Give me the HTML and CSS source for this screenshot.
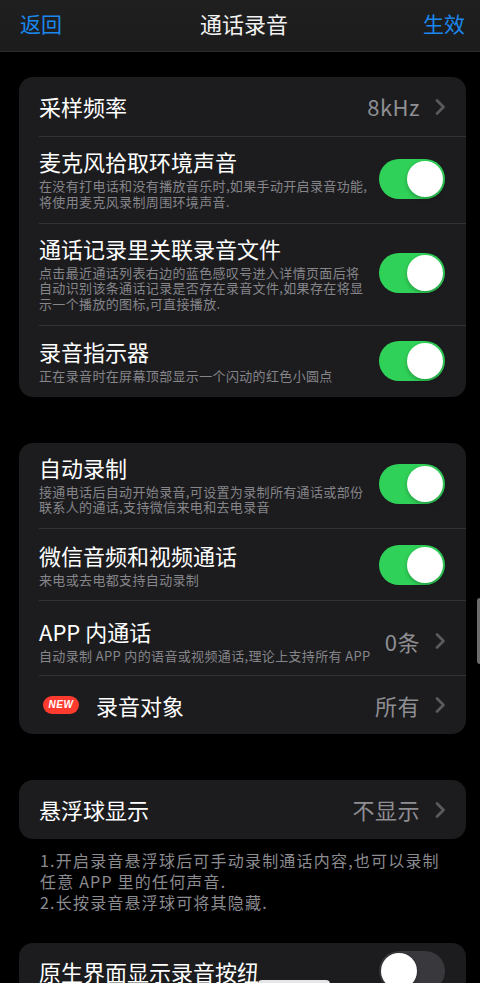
FILE: index.html
```html
<!DOCTYPE html>
<html lang="zh-CN">
<head>
<meta charset="utf-8">
<title>通话录音</title>
<link rel="stylesheet" href="styles.css">
</head>
<body>
<header class="nav">
  <span class="nav-btn nav-left">返回</span>
  <span class="nav-title">通话录音</span>
  <span class="nav-btn nav-right">生效</span>
</header>

<main class="page">
  <section class="card">
    <div class="row simple">
      <span class="title">采样频率</span>
      <span class="value">8kHz</span>
      <svg class="chev" width="12" height="18" viewBox="0 0 12 18"><polyline points="3,2.5 9.5,9 3,15.5"/></svg>
    </div>
    <div class="row">
      <div class="text">
        <div class="title">麦克风拾取环境声音</div>
        <div class="sub">在没有打电话和没有播放音乐时,如果手动开启录音功能,<br>将使用麦克风录制周围环境声音.</div>
      </div>
      <span class="switch on"><span class="knob"></span></span>
    </div>
    <div class="row">
      <div class="text">
        <div class="title">通话记录里关联录音文件</div>
        <div class="sub">点击最近通话列表右边的蓝色感叹号进入详情页面后将<br>自动识别该条通话记录是否存在录音文件,如果存在将显<br>示一个播放的图标,可直接播放.</div>
      </div>
      <span class="switch on"><span class="knob"></span></span>
    </div>
    <div class="row mid">
      <div class="text">
        <div class="title">录音指示器</div>
        <div class="sub">正在录音时在屏幕顶部显示一个闪动的红色小圆点</div>
      </div>
      <span class="switch on"><span class="knob"></span></span>
    </div>
  </section>

  <section class="card">
    <div class="row">
      <div class="text">
        <div class="title">自动录制</div>
        <div class="sub">接通电话后自动开始录音,可设置为录制所有通话或部份<br>联系人的通话,支持微信来电和去电录音</div>
      </div>
      <span class="switch on"><span class="knob"></span></span>
    </div>
    <div class="row mid">
      <div class="text">
        <div class="title">微信音频和视频通话</div>
        <div class="sub">来电或去电都支持自动录制</div>
      </div>
      <span class="switch on"><span class="knob"></span></span>
    </div>
    <div class="row mid tall">
      <div class="text">
        <div class="title">APP 内通话</div>
        <div class="sub">自动录制 APP 内的语音或视频通话,理论上支持所有 APP</div>
      </div>
      <span class="value">0条</span>
      <svg class="chev" width="12" height="18" viewBox="0 0 12 18"><polyline points="3,2.5 9.5,9 3,15.5"/></svg>
    </div>
    <div class="row simple">
      <span class="badge">NEW</span>
      <span class="title">录音对象</span>
      <span class="value">所有</span>
      <svg class="chev" width="12" height="18" viewBox="0 0 12 18"><polyline points="3,2.5 9.5,9 3,15.5"/></svg>
    </div>
  </section>

  <section class="card">
    <div class="row simple">
      <span class="title">悬浮球显示</span>
      <span class="value">不显示</span>
      <svg class="chev" width="12" height="18" viewBox="0 0 12 18"><polyline points="3,2.5 9.5,9 3,15.5"/></svg>
    </div>
  </section>
  <p class="note">1.开启录音悬浮球后可手动录制通话内容,也可以录制<br>任意 APP 里的任何声音.<br>2.长按录音悬浮球可将其隐藏.</p>

  <section class="card">
    <div class="row simple short">
      <span class="title">原生界面显示录音按纽</span>
      <span class="switch"><span class="knob"></span></span>
    </div>
  </section>
</main>

<div class="scroll-indicator"></div>
<div class="toast-edge"></div>
</body>
</html>
```

FILE: styles.css
```css
* { box-sizing: border-box; }

html, body {
  margin: 0;
  padding: 0;
  background: #000;
  color: #fff;
  font-family: "Noto Sans CJK SC", "Noto Sans", sans-serif;
}

body {
  width: 480px;
  height: 983px;
  overflow: hidden;
  position: relative;
}

.nav {
  height: 52px;
  display: grid;
  grid-template-columns: 1fr auto 1fr;
  align-items: center;
  padding: 0 15px 6px 20px;
  background: linear-gradient(180deg, #1f1f1f 0%, #1c1c1c 100%);
  border-bottom: 1px solid #2a2a2a;
}

.nav-btn {
  font-size: 21px;
  line-height: 28px;
  color: #1a88ef;
}

.nav-right { justify-self: end; }

.nav-title {
  font-size: 22px;
  line-height: 28px;
  color: #f2f2f2;
  padding-left: 3px;
}

.page {
  padding: 25px 14px 0 19px;
  display: flex;
  flex-direction: column;
}

.card {
  background: #1c1c1e;
  border-radius: 14px;
  padding-left: 20px;
  margin-bottom: 46px;
  overflow: hidden;
}

.row {
  display: flex;
  align-items: center;
  padding: 11px 21px 13.5px 0;
  gap: 10px;
}

.row + .row { border-top: 1px solid #323234; }

.row.simple {
  height: 59px;
  padding-top: 0;
  padding-bottom: 0;
  gap: 0;
}

.row.short { height: 56px; }

.row.mid {
  min-height: 72px;
  padding-top: 0;
  padding-bottom: 0;
}

.row.tall { min-height: 75px; padding-top: 6px; }

.text {
  flex: 1;
  min-width: 0;
}

.title {
  font-size: 22px;
  line-height: 27px;
  color: #fff;
  flex: 1;
}

.sub {
  margin-top: 3px;
  font-size: 13px;
  line-height: 15.5px;
  letter-spacing: 0.35px;
  color: #85858a;
  white-space: nowrap;
}

.value {
  font-size: 22px;
  line-height: 27px;
  letter-spacing: 0.5px;
  color: #8e8e93;
  margin-right: 14px;
}

.row.mid .value { margin-right: 4px; }

.chev {
  flex: none;
  margin-right: -1px;
}

.chev polyline {
  fill: none;
  stroke: #59595e;
  stroke-width: 2.8;
  stroke-linecap: round;
  stroke-linejoin: round;
}

.switch {
  flex: none;
  width: 66px;
  height: 40px;
  border-radius: 20px;
  background: #39393d;
  display: flex;
  align-items: center;
  padding: 2px;
}

.switch.on {
  background: #30d158;
  justify-content: flex-end;
}

.knob {
  width: 36px;
  height: 36px;
  border-radius: 50%;
  background: #fff;
  box-shadow: 0 2px 4px rgba(0, 0, 0, 0.25);
}

.badge {
  flex: none;
  width: 36px;
  height: 18px;
  margin: 0 17px 0 4px;
  border-radius: 9px;
  background: #ff3b30;
  color: #fff;
  font-family: "Liberation Sans", "Noto Sans", sans-serif;
  font-size: 10px;
  font-weight: 700;
  font-style: italic;
  line-height: 18px;
  letter-spacing: 0.6px;
  text-align: center;
}

.card:nth-of-type(3) { margin-bottom: 0; }

.note {
  margin: 11px 0 30px;
  padding-left: 21px;
  font-size: 16px;
  line-height: 21px;
  letter-spacing: 1.2px;
  color: #8b8b90;
  white-space: nowrap;
}

.scroll-indicator {
  position: absolute;
  left: 477px;
  top: 598px;
  width: 6px;
  height: 66px;
  border-radius: 3px;
  background: #6c6c6e;
}

.toast-edge {
  position: absolute;
  left: 258px;
  top: 980px;
  width: 72px;
  height: 12px;
  border-radius: 4px;
  background: #e6e6e6;
}
```
